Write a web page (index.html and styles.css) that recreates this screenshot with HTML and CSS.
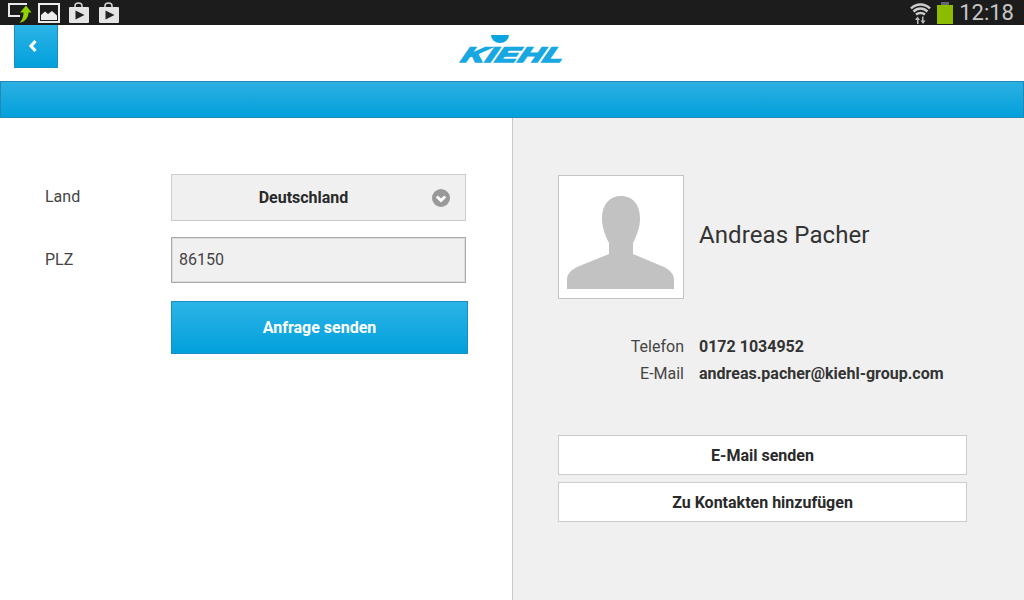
FILE: index.html
```html
<!DOCTYPE html>
<html lang="de">
<head>
    <meta charset="UTF-8">
    <title>Kontakt</title>
    <link rel="stylesheet" href="styles.css">
</head>
<body>
    <div class="status-bar">
        <div class="status-icons">
            <svg class="upload-icon" width="24" height="22" viewBox="0 0 24 22">
                <path d="M19 2H1V14H12" fill="none" stroke="#e8e8e8" stroke-width="2"/>
                <path d="M23.500 10.500L18 3.500L12 10.500H15.500C15.500 14.500 14.500 17.500 11.500 21C17.500 19.500 20.500 15.500 20.500 10.500Z" fill="#8fd400"/>
            </svg>
            <svg width="22" height="22" viewBox="0 0 22 22">
                <rect x="1" y="2" width="20" height="18" fill="#1c1c1c" stroke="#ececec" stroke-width="2"/>
                <path d="M3 18V13L7 9.500L10 12L14 9L19 13.500V18Z" fill="#ececec"/>
            </svg>
            <svg width="22" height="22" viewBox="0 0 22 22">
                <path d="M7 6V4C7 0 14 0 14 4V6" fill="none" stroke="#ddd" stroke-width="1.500"/>
                <rect x="1" y="5" width="20" height="16" rx="1" fill="#e4e4e4"/>
                <path d="M7.500 8.500L16.500 13L7.500 17.500Z" fill="#222"/>
            </svg>
            <svg width="22" height="22" viewBox="0 0 22 22">
                <path d="M7 6V4C7 0 14 0 14 4V6" fill="none" stroke="#ddd" stroke-width="1.500"/>
                <rect x="1" y="5" width="20" height="16" rx="1" fill="#e4e4e4"/>
                <path d="M7.500 8.500L16.500 13L7.500 17.500Z" fill="#222"/>
            </svg>
        </div>
        <div class="status-right">
            <svg width="21" height="22" viewBox="0 0 21 22">
                <path d="M1 6.500C6 1 15 1 20 6.500M3.500 9.500C7.500 5.500 13.500 5.500 17.500 9.500M6 12.500C8.500 10.500 12.500 10.500 15 12.500" fill="none" stroke="#ccc" stroke-width="2.500"/>
                <path d="M7 22V18H5L7.500 14.500L10 18H8.500V22ZM12 14.500V18.500H10.500L13 22L15.500 18.500H13.500V14.500Z" fill="#bbb"/>
            </svg>
            <div class="battery"><span class="battery-nub"></span></div>
            <span class="clock">12:18</span>
        </div>
    </div>

    <header class="app-header">
        <button class="back-btn">
            <svg width="10" height="14" viewBox="0 0 10 14"><path d="M7.500 2L3 7L7.500 12" fill="none" stroke="#fff" stroke-width="3.200"/></svg>
        </button>
        <div class="logo">
            <span class="logo-dot"></span>
            <span class="logo-text">KIEHL</span>
        </div>
    </header>
    <div class="blue-bar"></div>

    <main class="content">
        <section class="form-pane">
            <div class="form-row">
                <label class="form-label">Land</label>
                <div class="select-box">
                    <span>Deutschland</span>
                    <svg class="select-arrow" width="18" height="18" viewBox="0 0 18 18">
                        <circle cx="9" cy="9" r="9" fill="#999"/>
                        <path d="M4.800 7.500L9 11.500L13.200 7.500" fill="none" stroke="#fff" stroke-width="3"/>
                    </svg>
                </div>
            </div>
            <div class="form-row">
                <label class="form-label">PLZ</label>
                <div class="text-input">86150</div>
            </div>
            <button class="send-btn">Anfrage senden</button>
        </section>

        <section class="contact-pane">
            <div class="person">
                <div class="avatar">
                    <svg width="107" height="93" viewBox="0 0 107 93">
                        <path d="M0 93V84C0 78 4 74 10 71L42 58V47C37 37 35 30 35 22C35 8 43 0 54 0C66 0 73 9 73 22C73 30 71 37 66 47V58L97 71C103 74 107 78 107 84V93Z" fill="#c2c2c2"/>
                    </svg>
                </div>
                <div class="person-name">Andreas Pacher</div>
            </div>
            <dl class="details">
                <dt>Telefon</dt>
                <dd>0172 1034952</dd>
                <dt>E-Mail</dt>
                <dd>andreas.pacher@kiehl-group.com</dd>
            </dl>
            <div class="actions">
                <button class="action-btn">E-Mail senden</button>
                <button class="action-btn">Zu Kontakten hinzufügen</button>
            </div>
        </section>
    </main>
</body>
</html>
```

FILE: styles.css
```css
* {
    box-sizing: border-box;
}

html, body {
    margin: 0;
    height: 100%;
    overflow: hidden;
}

body {
    width: 1024px;
    height: 600px;
    display: flex;
    flex-direction: column;
    font-family: Roboto, Arial, sans-serif;
    color: #333;
    background: #fff;
}

.status-bar {
    height: 25px;
    flex: none;
    display: flex;
    justify-content: space-between;
    align-items: center;
    background: #1c1c1c;
    padding: 0 10px 0 8px;
}

.status-icons {
    display: flex;
    gap: 8px;
    align-items: center;
}

.upload-icon {
    margin-right: -2px;
}

.status-right {
    display: flex;
    align-items: center;
    gap: 6px;
}

.battery {
    position: relative;
    width: 16px;
    height: 19px;
    margin-top: 4px;
    background: #8dbb00;
}

.battery-nub {
    position: absolute;
    left: 4px;
    top: -3px;
    width: 8px;
    height: 3px;
    background: #666;
}

.clock {
    color: #c8c8c8;
    font-size: 22px;
}

.app-header {
    height: 56px;
    flex: none;
    position: relative;
    display: flex;
    justify-content: center;
    padding-left: 1px;
    background: #fff;
}

.back-btn {
    position: absolute;
    left: 14px;
    top: 0;
    width: 44px;
    height: 43px;
    padding: 0 6px 0 0;
    border: 1px solid #1b8fc0;
    border-top: 0;
    background: linear-gradient(#2cb4e6, #02a0dc);
    display: flex;
    align-items: center;
    justify-content: center;
}

.logo {
    position: relative;
    width: 104px;
    height: 56px;
}

.logo-dot {
    position: absolute;
    left: 30px;
    top: 10px;
    width: 18px;
    height: 8px;
    background: #0ba6e0;
    border-radius: 0 0 9px 9px / 0 0 8px 8px;
}

.logo-text {
    position: absolute;
    left: 1px;
    top: 19px;
    width: 104px;
    text-align: center;
    color: #17a8e2;
    font-family: "Liberation Sans", Arial, sans-serif;
    font-size: 21px;
    line-height: 21px;
    font-weight: 700;
    font-style: italic;
    -webkit-text-stroke: 1.6px #17a8e2;
    letter-spacing: 0.5px;
    transform: scaleX(1.56) skewX(-14deg);
}

.blue-bar {
    height: 37px;
    flex: none;
    background: linear-gradient(#2cb0e2, #02a0dc);
    border: 1px solid #2189b5;
}

.content {
    flex: 1;
    display: flex;
    min-height: 0;
}

.form-pane {
    width: 513px;
    padding: 56px 44px 0 45px;
    border-right: 1px solid #c8c8c8;
    background: #fff;
}

.form-row {
    display: flex;
    align-items: center;
    margin-bottom: 16px;
}

.form-label {
    width: 126px;
    margin-top: -2px;
    font-size: 16px;
    color: #444;
}

.select-box {
    position: relative;
    width: 295px;
    height: 47px;
    display: flex;
    align-items: center;
    justify-content: center;
    padding-right: 30px;
    background: #f0f0f0;
    border: 1px solid #ccc;
    font-size: 16px;
    font-weight: 700;
    color: #2a2a2a;
}

.select-arrow {
    position: absolute;
    right: 15px;
    top: 14px;
}

.text-input {
    width: 295px;
    height: 46px;
    line-height: 44px;
    padding-left: 7px;
    background: #f0f0f0;
    border: 1px solid #aaa;
    box-shadow: inset 0 0 0 1px #ddd;
    font-size: 16px;
    color: #444;
}

.send-btn {
    display: block;
    width: 297px;
    height: 53px;
    margin: 18px 0 0 126px;
    padding: 0;
    border: 1px solid #1b8fc0;
    background: linear-gradient(#2cb4e6, #02a0dc);
    color: #fff;
    font-family: inherit;
    font-size: 16px;
    font-weight: 700;
}

.contact-pane {
    flex: 1;
    padding: 57px 57px 0 45px;
    background: #f0f0f0;
}

.person {
    display: flex;
    align-items: center;
    gap: 15px;
}

.avatar {
    width: 126px;
    height: 124px;
    display: flex;
    align-items: flex-end;
    justify-content: center;
    padding: 0 1px 9px 0;
    background: #fff;
    border: 1px solid #c4c4c4;
}

.person-name {
    font-size: 24px;
    margin-top: -5px;
    letter-spacing: 0.1px;
}

.details {
    display: grid;
    grid-template-columns: 126px 1fr;
    column-gap: 15px;
    row-gap: 8px;
    margin: 38px 0 0;
    font-size: 16px;
    line-height: 19px;
}

.details dt {
    text-align: right;
    color: #444;
}

.details dd {
    margin: 0;
    font-weight: 700;
}

.actions {
    display: flex;
    flex-direction: column;
    gap: 7px;
    margin-top: 52px;
}

.action-btn {
    height: 40px;
    padding: 0;
    background: #fff;
    border: 1px solid #ccc;
    font-family: inherit;
    font-size: 16px;
    font-weight: 700;
    color: #2a2a2a;
}
```
